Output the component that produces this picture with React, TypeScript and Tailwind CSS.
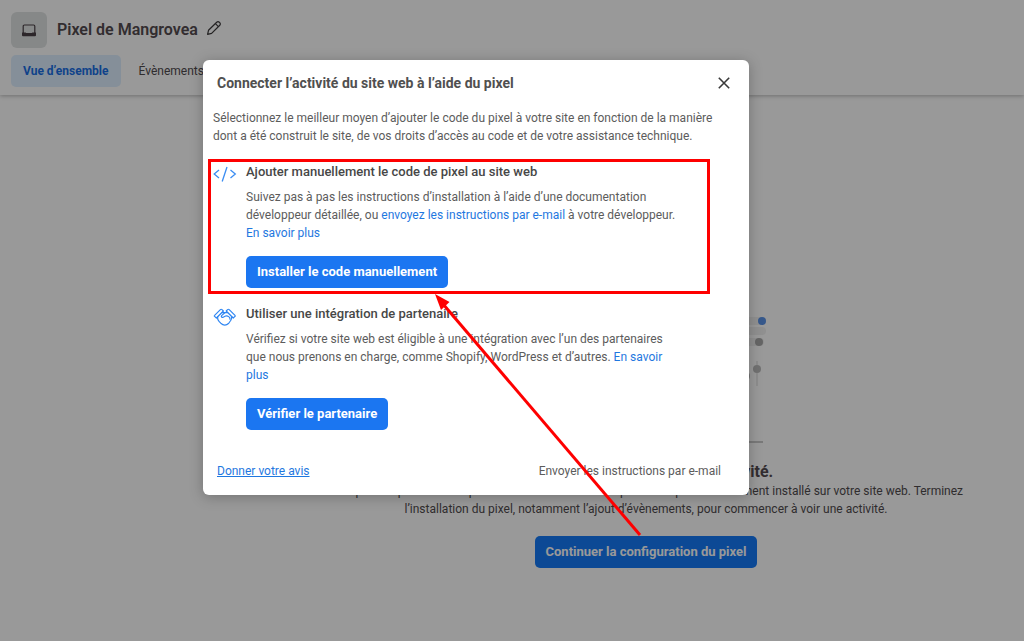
import { ReactNode } from 'react'

interface OptionProps {
    icon: ReactNode;
    title: string;
    action: string;
    highlighted?: boolean;
    children: ReactNode;
}

const LaptopIcon = () => (
    <svg className="h-4 w-4" viewBox="0 0 16 16" fill="none" aria-hidden="true">
        <rect x="2.2" y="3" width="11.6" height="8.6" rx="1.2" stroke="#4a4046" strokeWidth="1.2" />
        <path d="M1 10.4h3.6l1 1h4.8l1-1H15v2.9a1 1 0 0 1-1 1H2a1 1 0 0 1-1-1z" fill="#4a4046" />
    </svg>
)

const PencilIcon = () => (
    <svg className="h-4 w-4" viewBox="0 0 16 16" fill="none" stroke="#3c3a3b" strokeWidth="1.2" strokeLinejoin="round" aria-hidden="true">
        <path d="M1.6 14.4l.9-4.1 8.2-8.1a1.9 1.9 0 0 1 2.6 0l.5.5a1.9 1.9 0 0 1 0 2.6l-8.2 8.1z" />
        <path d="M9.4 3.6l3 3" />
    </svg>
)

const CodeIcon = () => (
    <svg className="h-5 w-6" viewBox="0 0 24 20" fill="none" stroke="#3b8df2" strokeWidth="1.3" aria-hidden="true">
        <path d="M6 7L1.2 11 6 15M17.5 7l4.8 4-4.8 4M14 4L9.2 18.5" />
    </svg>
)

const HandshakeIcon = () => (
    <svg className="mt-0.5 h-5 w-6" viewBox="0 0 24 20" fill="none" stroke="#2f86f2" strokeWidth="1.2" strokeLinejoin="round" strokeLinecap="round" aria-hidden="true">
        <path d="M1.6 8.4L7.4 2.6q.8-.7 1.6 0l1.4 1.4-7 7-1.8-1.6q-.6-.5 0-1z" />
        <path d="M22 8.4l-5.8-5.8q-.8-.7-1.6 0L13.2 4l7 7 1.8-1.6q.6-.5 0-1z" />
        <path d="M9 5.6h5.6M4.8 9.8c-.6 2.2.2 3.6 1.4 4.8l1.6 1.6c2.4 2.2 5.6 2.2 8 0 2-2 3-3.6 3-6.4" />
        <path d="M11.8 5.8L8.6 8.6c-.8 1 .4 2.2 1.6 1.6l2.4-1.2c2.2-.4 4.6 1 4.4 3.2" />
    </svg>
)

const CloseIcon = () => (
    <svg className="h-3 w-3" viewBox="0 0 12 12" stroke="#3a3a3a" strokeWidth="1.6" aria-hidden="true">
        <path d="M.8.8l10.4 10.4M11.2.8L.8 11.2" />
    </svg>
)

const Illustration = () => (
    <svg className="h-[140px] w-[240px]" viewBox="0 0 240 140" aria-hidden="true">
        <g fill="#f1f1f1">
            <rect x="120" y="7" width="120" height="8" rx="4" />
            <rect x="120" y="17" width="120" height="8" rx="4" />
            <rect x="120" y="28" width="118" height="8" rx="4" />
        </g>
        <circle cx="236" cy="11" r="4" fill="#5b93e8" />
        <circle cx="233" cy="32" r="4" fill="#a8a8a8" />
        <path d="M231 51v25M220 58v25" stroke="#e6e6e6" strokeWidth="1.5" />
        <circle cx="231" cy="59" r="4" fill="#bdbdbd" />
        <circle cx="220" cy="66" r="4" fill="#bdbdbd" />
        <path d="M2 132h235" stroke="#b9b9b9" strokeWidth="1.5" />
    </svg>
)

const Option = ({ icon, title, action, highlighted, children }: OptionProps) => (
    <section className="relative flex gap-2.5 pr-[68px] pl-2.5">
        {highlighted && <div className="pointer-events-none absolute -top-1 -bottom-1.5 left-[5px] right-[39px] border-3 border-[#fe0000]" />}
        <div className="w-6 shrink-0">{icon}</div>
        <div className="-ml-px">
            <h3 className="text-[13px] leading-[18px] font-medium text-[#474747]">{title}</h3>
            <p className="mt-[7px]">{children}</p>
            <button className="mt-3.5 h-8 cursor-pointer rounded-[5px] bg-[#1b76f1] px-[11px] text-[13px] font-bold text-white">{action}</button>
        </div>
    </section>
)

export default function App() {
    return (
        <div className="relative min-h-screen bg-white font-['Roboto',sans-serif] text-[12px] leading-[18px] text-[#504b4e]">
            <header className="px-[11px] pt-3 pb-2 shadow-[0_1px_4px_rgba(0,0,0,0.28)]">
                <div className="flex items-center gap-2">
                    <div className="mr-0.5 flex h-9 w-9 items-center justify-center rounded-md bg-[#e0e3e3]">
                        <LaptopIcon />
                    </div>
                    <h1 className="text-base font-semibold text-[#544c51]">Pixel de Mangrovea</h1>
                    <button className="cursor-pointer pb-1" aria-label="Modifier le nom">
                        <PencilIcon />
                    </button>
                </div>
                <nav className="mt-[7px] flex gap-1.5">
                    <a href="#" className="flex h-8 items-center rounded-[5px] bg-[#deefff] px-3 font-bold text-[#1a6fe6]">Vue d’ensemble</a>
                    <a href="#" className="flex h-8 items-center px-3">Évènements</a>
                </nav>
            </header>

            <main className="flex flex-col items-center pt-[215px] pb-10 pl-[268px] text-center">
                <Illustration />
                <h2 className="mt-3 text-base leading-5 font-bold text-[#544c51]">Votre pixel n’a reçu aucune activité.</h2>
                <p className="max-w-[650px]">
                    Cela peut se produire lorsque le code de base de votre pixel n’est pas correctement installé sur votre site web. Terminez l’installation du pixel, notamment l’ajout d’évènements, pour commencer à voir une activité.
                </p>
                <button className="mt-[18px] h-8 cursor-pointer rounded-[5px] bg-[#147af8] px-[11px] text-[13px] font-bold text-white">Continuer la configuration du pixel</button>
            </main>

            <div className="absolute inset-0 flex items-start justify-center bg-black/40 pt-[60px] pr-[72px]">
                <div role="dialog" aria-labelledby="dialog-title" className="relative w-full max-w-[546px] rounded-md bg-white pb-[15px] text-[#5c5c5c] shadow-[0_2px_14px_rgba(0,0,0,0.25)]">
                    <div className="flex items-center justify-between pt-[13px] pr-[19px] pl-3.5">
                        <h2 id="dialog-title" className="text-sm font-bold text-[#505050]">Connecter l’activité du site web à l’aide du pixel</h2>
                        <button className="cursor-pointer" aria-label="Fermer">
                            <CloseIcon />
                        </button>
                    </div>
                    <p className="mt-4 pr-4 pl-2.5">
                        Sélectionnez le meilleur moyen d’ajouter le code du pixel à votre site en fonction de la manière dont a été construit le site, de vos droits d’accès au code et de votre assistance technique.
                    </p>

                    <div className="mt-[18px] flex flex-col gap-[17px]">
                        <Option icon={<CodeIcon />} title="Ajouter manuellement le code de pixel au site web" action="Installer le code manuellement" highlighted>
                            Suivez pas à pas les instructions d’installation à l’aide d’une documentation développeur détaillée, ou <a href="#" className="text-[#1f78e0]">envoyez les instructions par e-mail</a> à votre développeur. <a href="#" className="text-[#1f78e0]">En savoir plus</a>
                        </Option>
                        <Option icon={<HandshakeIcon />} title="Utiliser une intégration de partenaire" action="Vérifier le partenaire">
                            Vérifiez si votre site web est éligible à une intégration avec l’un des partenaires que nous prenons en charge, comme Shopify, WordPress et d’autres. <a href="#" className="text-[#1f78e0]">En savoir plus</a>
                        </Option>
                    </div>

                    <div className="mt-8 flex justify-between pr-7 pl-3.5">
                        <a href="#" className="text-[#1f78e0] underline">Donner votre avis</a>
                        <button className="cursor-pointer">Envoyer les instructions par e-mail</button>
                    </div>

                    {/* arrow from the page button up to the highlighted option */}
                    <svg className="pointer-events-none absolute top-[234px] left-[230px] h-[245px] w-[210px]" viewBox="0 0 210 245" aria-hidden="true">
                        <path d="M10 10L207 241" stroke="#fe0000" strokeWidth="3" />
                        <path d="M2 0l14.5 8-8.5 8z" fill="#fe0000" />
                    </svg>
                </div>
            </div>
        </div>
    )
}
